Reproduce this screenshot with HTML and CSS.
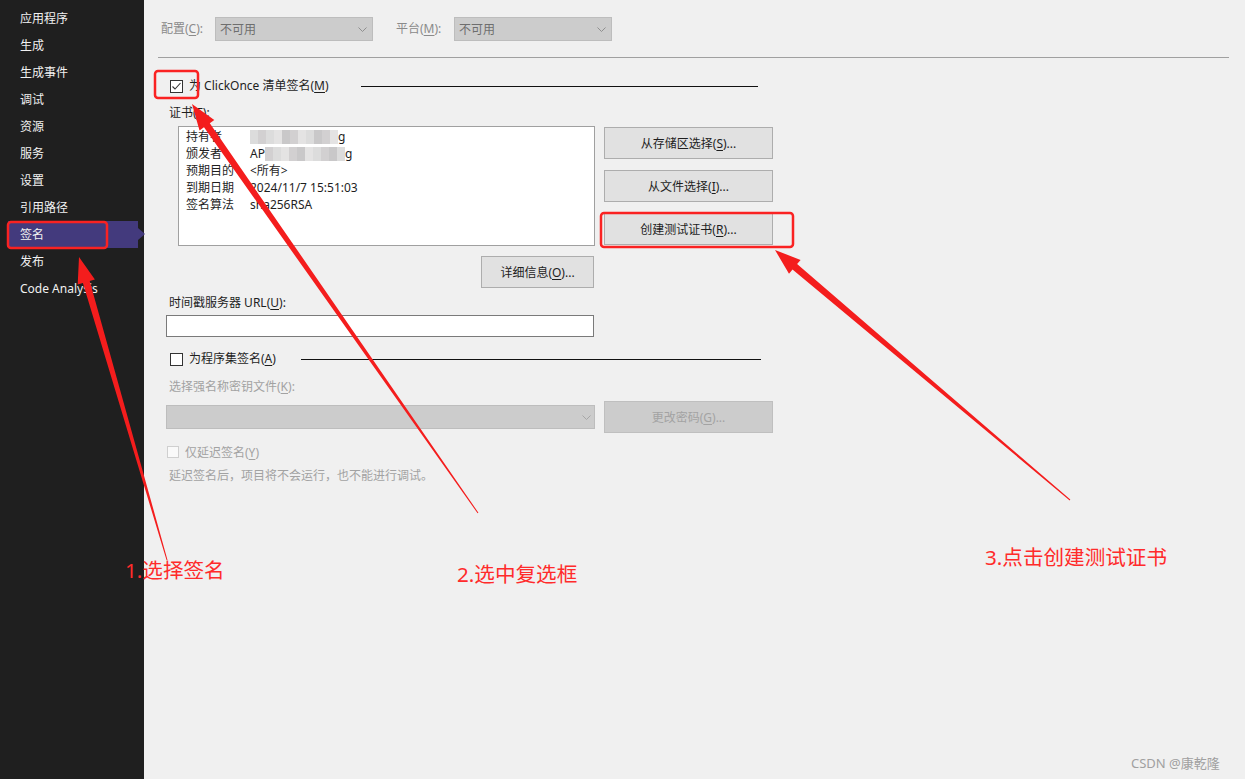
FILE: index.html
```html
<!DOCTYPE html>
<html>

<head>
  <meta charset="utf-8">
  <link rel="stylesheet" href="styles.css">
</head>

<body>
  <div class="app">
    <nav class="sidebar">
      <div class="nav-item">应用程序</div>
      <div class="nav-item">生成</div>
      <div class="nav-item">生成事件</div>
      <div class="nav-item">调试</div>
      <div class="nav-item">资源</div>
      <div class="nav-item">服务</div>
      <div class="nav-item">设置</div>
      <div class="nav-item">引用路径</div>
      <div class="nav-item active">签名</div>
      <div class="nav-item">发布</div>
      <div class="nav-item">Code Analysis</div>
    </nav>

    <main class="page">
      <div class="top-row">
        <span class="field-label">配置(<u>C</u>):</span>
        <div class="select">不可用
          <svg width="9" height="5" viewBox="0 0 9 5"><path d="M0.5 0.5 L4.5 4.5 L8.5 0.5" fill="none" stroke="#8f8f8f"/></svg>
        </div>
        <span class="field-label platform">平台(<u>M</u>):</span>
        <div class="select">不可用
          <svg width="9" height="5" viewBox="0 0 9 5"><path d="M0.5 0.5 L4.5 4.5 L8.5 0.5" fill="none" stroke="#8f8f8f"/></svg>
        </div>
      </div>
      <div class="rule"></div>

      <div class="content">
        <div class="check-row first">
          <span class="checkbox">
            <svg width="11" height="11" viewBox="0 0 11 11"><path d="M1.5 5.5 L4 8 L9.5 2" fill="none" stroke="#333" stroke-width="1.1"/></svg>
          </span>
          <span class="check-text manifest">为 ClickOnce 清单签名(<u>M</u>)</span>
          <span class="group-line manifest-line"></span>
        </div>

        <div class="label cert-label">证书(<u>F</u>):</div>
        <div class="cert-grid">
          <div class="cert-box">
            <div class="cert-row"><span class="k">持有者</span><span class="v">
              <span class="mosaic"><i class="m1"></i><i class="m2"></i><i class="m1"></i><i class="m3"></i><i class="m4"></i><i class="m2"></i><i class="m3"></i><i class="m1"></i><i class="m4"></i><i class="m2"></i><i class="m3"></i></span>g</span></div>
            <div class="cert-row"><span class="k">颁发者</span><span class="v">AP<span class="mosaic"><i class="m2"></i><i class="m1"></i><i class="m3"></i><i class="m2"></i><i class="m4"></i><i class="m3"></i><i class="m1"></i><i class="m2"></i><i class="m4"></i><i class="m1"></i></span>g</span></div>
            <div class="cert-row"><span class="k">预期目的</span><span class="v">&lt;所有&gt;</span></div>
            <div class="cert-row"><span class="k">到期日期</span><span class="v">2024/11/7 15:51:03</span></div>
            <div class="cert-row"><span class="k">签名算法</span><span class="v">sha256RSA</span></div>
          </div>
          <div class="btn-stack">
            <button class="btn">从存储区选择(<u>S</u>)...</button>
            <button class="btn">从文件选择(<u>I</u>)...</button>
            <button class="btn">创建测试证书(<u>R</u>)...</button>
          </div>
          <button class="btn detail">详细信息(<u>O</u>)...</button>
        </div>

        <div class="label url-label">时间戳服务器 URL(<u>U</u>):</div>
        <div class="url-input"></div>

        <div class="check-row second">
          <span class="checkbox"></span>
          <span class="check-text assembly">为程序集签名(<u>A</u>)</span>
          <span class="group-line assembly-line"></span>
        </div>

        <div class="label muted key-label">选择强名称密钥文件(<u>K</u>):</div>
        <div class="key-row">
          <div class="select wide">
            <svg width="9" height="5" viewBox="0 0 9 5"><path d="M0.5 0.5 L4.5 4.5 L8.5 0.5" fill="none" stroke="#a6a6a6"/></svg>
          </div>
          <button class="btn off">更改密码(<u>G</u>)...</button>
        </div>

        <div class="check-row delay">
          <span class="checkbox off"></span>
          <span class="muted">仅延迟签名(<u>Y</u>)</span>
        </div>
        <div class="label muted note">延迟签名后，项目将不会运行，也不能进行调试。</div>
      </div>
    </main>

    <svg class="marks" width="1245" height="779" viewBox="0 0 1245 779">
      <rect x="8" y="222" width="99" height="26" rx="3" fill="none" stroke="#fa2222" stroke-width="2.5"/>
      <rect x="155" y="71" width="43" height="27" rx="3" fill="none" stroke="#fa2222" stroke-width="2.5"/>
      <rect x="601" y="213" width="192" height="34" rx="3" fill="none" stroke="#fa2222" stroke-width="2.5"/>
      <polygon fill="#f41d1d" points="79,257 94.9,279.5 89.7,281.0 167.5,559.9 166.5,560.1 82.9,283.0 77.7,284.5"/>
      <polygon fill="#f41d1d" points="192,104 214.3,120.1 209.8,123.3 478.4,512.7 477.6,513.3 204.0,127.3 199.5,130.5"/>
      <polygon fill="#f41d1d" points="775,250 800.6,259.9 797.1,264.1 1070.3,499.6 1069.7,500.4 792.5,269.5 789.0,273.7"/>
    </svg>

    <div class="note-tag tag1">1.选择签名</div>
    <div class="note-tag tag2">2.选中复选框</div>
    <div class="note-tag tag3">3.点击创建测试证书</div>
    <div class="watermark">CSDN @康乾隆</div>
  </div>
</body>

</html>
```

FILE: styles.css
```css
body {
  margin: 0;
  font-family: "Noto Sans", "Noto Sans CJK SC", sans-serif;
  font-size: 12px;
  color: #1e1e1e;
}

u {
  text-underline-offset: 2px;
}

.app {
  display: flex;
  width: 1245px;
  height: 779px;
  position: relative;
  overflow: hidden;
}

/* left navigation */
.sidebar {
  width: 144px;
  flex: none;
  background: #1f1f1f;
  padding-top: 5px;
  box-sizing: border-box;
}

.nav-item {
  height: 27px;
  line-height: 27px;
  padding-left: 20px;
  color: #f1f1f1;
}

.nav-item.active {
  position: relative;
  width: 130px;
  margin-left: 8px;
  padding-left: 12px;
  box-sizing: border-box;
  background: #433a7d;
}

.nav-item.active::after {
  content: "";
  position: absolute;
  left: 130px;
  top: 7px;
  border-left: 7px solid #433a7d;
  border-top: 6px solid transparent;
  border-bottom: 6px solid transparent;
}

/* page */
.page {
  flex: 1;
  background: #f0f0f0;
  padding: 17px 16px 0 14px;
}

.top-row {
  display: flex;
  align-items: center;
  height: 24px;
  margin-left: 3px;
}

.field-label {
  width: 54px;
  color: #8a8a8a;
  line-height: 16px;
}

.field-label.platform {
  width: 58px;
  margin-left: 23px;
}

.select {
  width: 158px;
  height: 24px;
  box-sizing: border-box;
  display: flex;
  align-items: center;
  justify-content: space-between;
  padding: 0 5px 0 4px;
  background: #cccccc;
  border: 1px solid #bdbdbd;
  color: #6e6e6e;
}

.select.wide {
  width: 429px;
  justify-content: flex-end;
  padding-right: 3px;
}

.rule {
  height: 1px;
  background: #a0a0a0;
  margin-top: 16px;
}

.content {
  padding-left: 8px;
}

.label {
  line-height: 16px;
  margin-left: 3px;
}

.muted {
  color: #a2a2a2;
}

.check-row {
  display: flex;
  align-items: center;
  height: 16px;
  margin-left: 4px;
}

.check-row.first {
  margin-top: 20px;
}

.check-row.second {
  margin-top: 14px;
}

.check-row.delay {
  margin-top: 11px;
  margin-left: 1px;
}

.checkbox {
  width: 13px;
  height: 13px;
  box-sizing: border-box;
  border: 1px solid #333;
  background: #fff;
  margin-right: 6px;
  display: flex;
  align-items: center;
  justify-content: center;
}

.checkbox.off {
  width: 12px;
  height: 12px;
  border-color: #cfcfcf;
  background: #f9f9f9;
}

.check-text {
  line-height: 16px;
  white-space: nowrap;
}

.check-text.manifest {
  width: 172px;
}

.check-text.assembly {
  width: 112px;
}

.group-line {
  height: 1px;
  background: #111;
}

.manifest-line {
  width: 397px;
}

.assembly-line {
  width: 460px;
}

.cert-label {
  margin-top: 11px;
}

.cert-grid,
.key-row {
  display: grid;
  grid-template-columns: 429px 169px;
  column-gap: 9px;
}

.cert-grid {
  margin-top: 5px;
}

.cert-box {
  justify-self: end;
  width: 417px;
  height: 120px;
  box-sizing: border-box;
  border: 1px solid #a0a0a0;
  background: #fff;
  padding: 1px 0 0 7px;
}

.cert-row {
  display: flex;
  height: 17px;
  line-height: 17px;
}

.cert-row .k {
  width: 64px;
}

.cert-row .v {
  display: flex;
  align-items: center;
}

.mosaic {
  display: inline-flex;
  height: 14px;
}

.mosaic i {
  display: block;
  width: 8px;
  height: 14px;
}

.mosaic .m1 { background: #dcdcdc; }
.mosaic .m2 { background: #d2d0d1; }
.mosaic .m3 { background: #e4e3e3; }
.mosaic .m4 { background: #c9c8c9; }

.btn-stack {
  display: flex;
  flex-direction: column;
  gap: 11px;
  padding-top: 1px;
}

.btn {
  height: 32px;
  padding: 0;
  border: 1px solid #adadad;
  background: #e1e1e1;
  font: inherit;
  color: #1e1e1e;
}

.btn.detail {
  grid-column: 1;
  justify-self: end;
  width: 113px;
  margin-top: 10px;
  margin-right: 1px;
}

.btn.off {
  background: #cccccc;
  border-color: #bfbfbf;
  color: #a3a3a3;
}

.url-label {
  margin-top: 7px;
}

.url-input {
  width: 428px;
  height: 22px;
  margin-top: 4px;
  box-sizing: border-box;
  border: 1px solid #7a7a7a;
  background: #fff;
}

.key-label {
  margin-top: 12px;
}

.key-row {
  align-items: center;
  margin-top: 6px;
}

.note {
  margin-top: 8px;
}

/* annotations drawn over the screenshot */
.marks {
  position: absolute;
  left: 0;
  top: 0;
  pointer-events: none;
}

.note-tag {
  position: absolute;
  font-family: "Noto Sans", "Noto Sans CJK SC", sans-serif;
  font-size: 20.6px;
  line-height: 28px;
  color: #ff2b2b;
  white-space: nowrap;
}

.tag1 { left: 125px; top: 556px; }
.tag2 { left: 457px; top: 560px; }
.tag3 { left: 985px; top: 543px; }

.watermark {
  position: absolute;
  left: 1131px;
  top: 754px;
  font-size: 13px;
  line-height: 18px;
  color: #a0a0a0;
}
```
